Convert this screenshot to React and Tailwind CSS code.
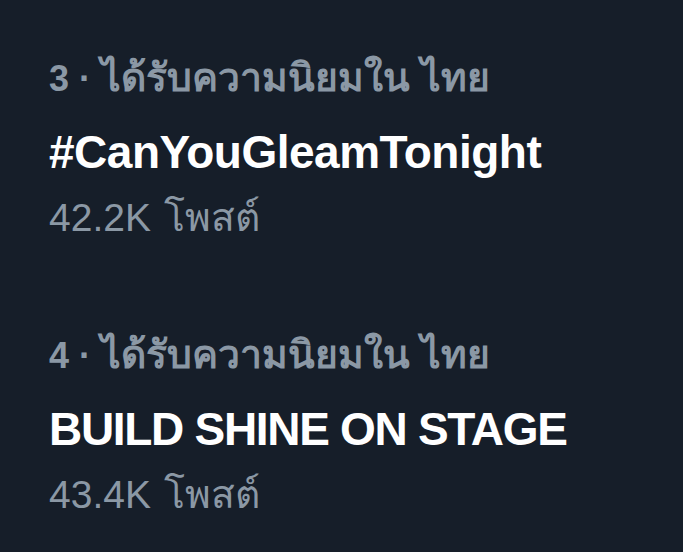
const trends = [
  { rank: 3, name: '#CanYouGleamTonight', posts: '42.2K', tracking: 'tracking-[-0.5px]' },
  { rank: 4, name: 'BUILD SHINE ON STAGE', posts: '43.4K', tracking: 'tracking-[-1.3px]' },
]

function TrendItem({ trend }) {
  return (
    <div className="flex flex-col">
      <div className="h-[70px] flex items-center font-bold text-[#8b98a5]">
        <span className="text-[36px]">
          {trend.rank} · <span className="text-[39px]">ได้รับความนิยมใน ไทย</span>
        </span>
      </div>
      <div className={'h-[78px] flex items-center text-[46px] font-bold text-white ' + trend.tracking}>
        {trend.name}
      </div>
      <div className="h-[54px] flex items-center text-[#8b98a5]">
        <span className="text-[39px]">
          {trend.posts} <span className="ml-[2px]">โพสต์</span>
        </span>
      </div>
    </div>
  )
}

export default function App() {
  return (
    <div
      className="w-[683px] h-[552px] bg-[#161e29] overflow-hidden pl-[49px] pt-[43px] flex flex-col gap-[75px]"
      style={{ fontFamily: '"Liberation Sans", "Noto Sans", sans-serif' }}
    >
      {trends.map((t, i) => (
        <TrendItem key={i} trend={t} />
      ))}
    </div>
  )
}
